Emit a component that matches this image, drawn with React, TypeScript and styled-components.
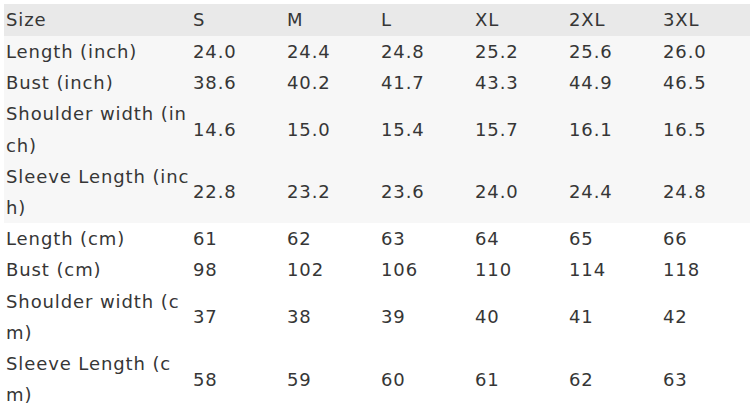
import styled, { createGlobalStyle } from 'styled-components';

const GlobalStyle = createGlobalStyle`
  html, body {
    margin: 0;
    padding: 0;
    background: #ffffff;
    overflow: hidden;
  }
`;

const sizes = ['S', 'M', 'L', 'XL', '2XL', '3XL'];

const rows: { label: string; values: string[]; inch: boolean }[] = [
    { label: 'Length (inch)', values: ['24.0', '24.4', '24.8', '25.2', '25.6', '26.0'], inch: true },
    { label: 'Bust (inch)', values: ['38.6', '40.2', '41.7', '43.3', '44.9', '46.5'], inch: true },
    { label: 'Shoulder width (inch)', values: ['14.6', '15.0', '15.4', '15.7', '16.1', '16.5'], inch: true },
    { label: 'Sleeve Length (inch)', values: ['22.8', '23.2', '23.6', '24.0', '24.4', '24.8'], inch: true },
    { label: 'Length (cm)', values: ['61', '62', '63', '64', '65', '66'], inch: false },
    { label: 'Bust (cm)', values: ['98', '102', '106', '110', '114', '118'], inch: false },
    { label: 'Shoulder width (cm)', values: ['37', '38', '39', '40', '41', '42'], inch: false },
    { label: 'Sleeve Length (cm)', values: ['58', '59', '60', '61', '62', '63'], inch: false },
];

const SizeChart = () => {
    return (
        <Wrap>
            <Table>
                <colgroup>
                    <col style={{ width: 187 }} />
                    {sizes.map((s) => <col key={s} style={{ width: 94 }} />)}
                </colgroup>
                <thead>
                    <HeadRow>
                        <Cell>Size</Cell>
                        {sizes.map((s) => <Cell key={s}>{s}</Cell>)}
                    </HeadRow>
                </thead>
                <tbody>
                    {rows.map((row) => (
                        <BodyRow key={row.label} $shaded={row.inch}>
                            <Cell>{row.label}</Cell>
                            {row.values.map((v, i) => <Cell key={i}>{v}</Cell>)}
                        </BodyRow>
                    ))}
                </tbody>
            </Table>
        </Wrap>
    );
};

export default function App() {
    return (
        <>
            <GlobalStyle/>
            <SizeChart/>
        </>
    );
}

const Wrap = styled.div`
  width: 750px;
  height: 410px;
  padding: 4px 0 0 4px;
  box-sizing: border-box;
  overflow: hidden;
`;

const Table = styled.table`
  border-collapse: collapse;
  table-layout: fixed;
  width: 751px;
  font-family: "DejaVu Sans", sans-serif;
  font-size: 18px;
  letter-spacing: 0.9px;
  color: #363636;
`;

const HeadRow = styled.tr`
  background: #e9e9e9;
  height: 32px;
`;

const BodyRow = styled.tr<{ $shaded: boolean }>`
  background: ${(p) => (p.$shaded ? '#f7f7f7' : '#ffffff')};
`;

const Cell = styled.td`
  padding: 0 0 0 2px;
  line-height: 31.2px;
  vertical-align: middle;
  text-align: left;
  word-break: break-all;
`;
